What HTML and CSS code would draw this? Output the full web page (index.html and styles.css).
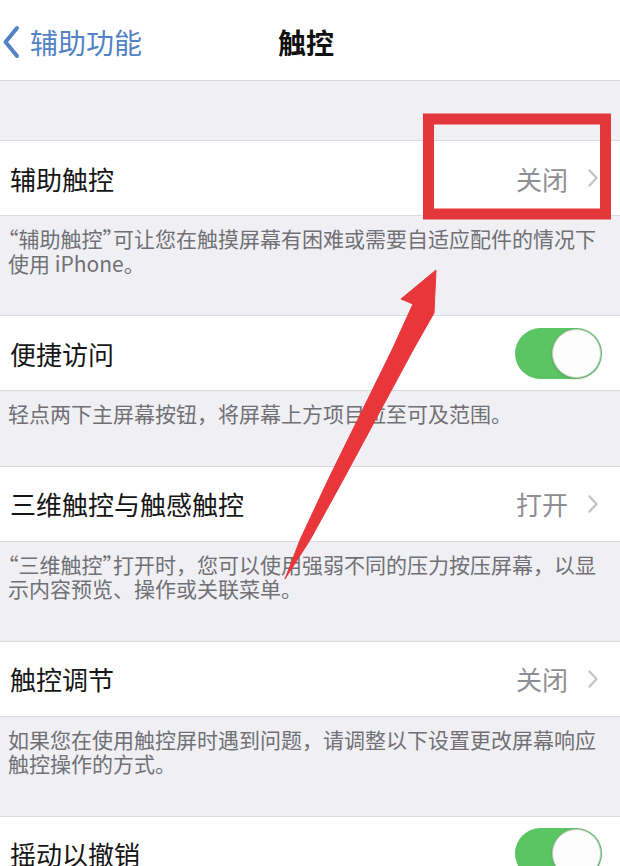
FILE: index.html
```html
<!DOCTYPE html>
<html lang="zh-CN">
<head>
<meta charset="utf-8">
<title>触控</title>
<link rel="stylesheet" href="styles.css">
</head>
<body>
<div class="screen">
  <header class="nav">
    <a class="back" href="#">
      <svg class="back-icon" viewBox="0 0 18 34" aria-hidden="true"><path d="M15 3 L3.5 17 L15 31" /></svg>
      <span>辅助功能</span>
    </a>
    <h1 class="title">触控</h1>
    <span></span>
  </header>

  <div class="spacer"></div>

  <section class="group">
    <div class="cell">
      <span class="label">辅助触控</span>
      <span class="detail">关闭</span>
      <svg class="chevron" viewBox="0 0 12 20" aria-hidden="true"><path d="M2.5 2.5 L9.5 10 L2.5 17.5" /></svg>
    </div>
    <p class="footer"><q>辅助触控</q>可让您在触摸屏幕有困难或需要自适应配件的情况下使用 iPhone。</p>
  </section>

  <section class="group">
    <div class="cell">
      <span class="label">便捷访问</span>
      <span class="switch on"><span class="knob"></span></span>
    </div>
    <p class="footer">轻点两下主屏幕按钮，将屏幕上方项目拉至可及范围。</p>
  </section>

  <section class="group">
    <div class="cell">
      <span class="label">三维触控与触感触控</span>
      <span class="detail">打开</span>
      <svg class="chevron" viewBox="0 0 12 20" aria-hidden="true"><path d="M2.5 2.5 L9.5 10 L2.5 17.5" /></svg>
    </div>
    <p class="footer"><q>三维触控</q>打开时，您可以使用强弱不同的压力按压屏幕，以显示内容预览、操作或关联菜单。</p>
  </section>

  <section class="group">
    <div class="cell">
      <span class="label">触控调节</span>
      <span class="detail">关闭</span>
      <svg class="chevron" viewBox="0 0 12 20" aria-hidden="true"><path d="M2.5 2.5 L9.5 10 L2.5 17.5" /></svg>
    </div>
    <p class="footer">如果您在使用触控屏时遇到问题，请调整以下设置更改屏幕响应触控操作的方式。</p>
  </section>

  <section class="group">
    <div class="cell">
      <span class="label">摇动以撤销</span>
      <span class="switch on"><span class="knob"></span></span>
    </div>
  </section>

  <!-- hand-drawn markup over the settings list -->
  <svg class="markup" viewBox="0 0 620 866" aria-hidden="true">
    <rect class="markup-box" x="428.5" y="119" width="177" height="95" />
    <polygon class="markup-arrow"
      points="436,270 401,299 413,304 392,350 328,480 300,540 285,579 310,540 343,480 413,350 434,313" />
  </svg>
</div>
</body>
</html>
```

FILE: styles.css
```css
* {
  box-sizing: border-box;
  margin: 0;
  padding: 0;
}

html,
body {
  width: 620px;
  height: 866px;
  overflow: hidden;
}

body {
  background: #efeff4;
  font-family: "Noto Sans CJK SC", "Noto Sans", sans-serif;
}

.screen {
  position: relative;
  width: 620px;
  height: 866px;
  overflow: hidden;
}

/* navigation bar */
.nav {
  height: 81px;
  background: #fff;
  border-bottom: 1px solid #d6d6db;
  display: grid;
  grid-template-columns: 1fr auto 1fr;
  align-items: center;
  padding: 3px 10px 0 2px;
}

.back {
  display: flex;
  align-items: center;
  gap: 10px;
  color: #5383c4;
  font-size: 28px;
  text-decoration: none;
  line-height: 1;
}

.back-icon {
  width: 18px;
  height: 34px;
  fill: none;
  stroke: #5383c4;
  stroke-width: 4;
  stroke-linecap: round;
  stroke-linejoin: round;
}

.title {
  font-size: 28px;
  font-weight: 700;
  color: #111;
  line-height: 1;
}

.spacer {
  height: 59px;
}

/* table cells */
.cell {
  height: 76px;
  background: #fff;
  border-top: 1px solid #dcdce0;
  border-bottom: 1px solid #dcdce0;
  display: flex;
  align-items: center;
  padding: 0 18px 0 10px;
}

.label {
  flex: 1;
  font-size: 26px;
  color: #151515;
}

.detail {
  font-size: 26px;
  color: #8e8e93;
}

.chevron {
  width: 12px;
  height: 20px;
  margin-left: 19px;
  margin-right: 3px;
  fill: none;
  stroke: #c4c4c9;
  stroke-width: 2.4;
  stroke-linecap: round;
  stroke-linejoin: round;
}

.footer {
  padding: 10px 14px 40px 8px;
  font-size: 21px;
  line-height: 24.5px;
  color: #707075;
}

/* half-width quotation marks */
.footer q {
  quotes: "“" "”";
}

.footer q::before,
.footer q::after {
  font-feature-settings: "halt";
}

/* toggle switch */
.switch {
  position: relative;
  width: 87px;
  height: 51px;
  border-radius: 26px;
  background: #e5e5ea;
  flex: none;
}

.switch.on {
  background: #5bc463;
}

.switch .knob {
  position: absolute;
  top: 1px;
  right: 1px;
  width: 49px;
  height: 49px;
  border-radius: 50%;
  background: #fdfdfd;
  border: 1.5px solid #c9cbc9;
  box-shadow: 0 1px 3px rgba(0, 0, 0, 0.15);
}

/* red annotation drawn over the list */
.markup {
  position: absolute;
  left: 0;
  top: 0;
  width: 620px;
  height: 866px;
  pointer-events: none;
}

.markup-box {
  fill: none;
  stroke: #e4373b;
  stroke-width: 11;
}

.markup-arrow {
  fill: #e8363b;
  stroke: #e8363b;
  stroke-width: 1;
  stroke-linejoin: round;
}
```
